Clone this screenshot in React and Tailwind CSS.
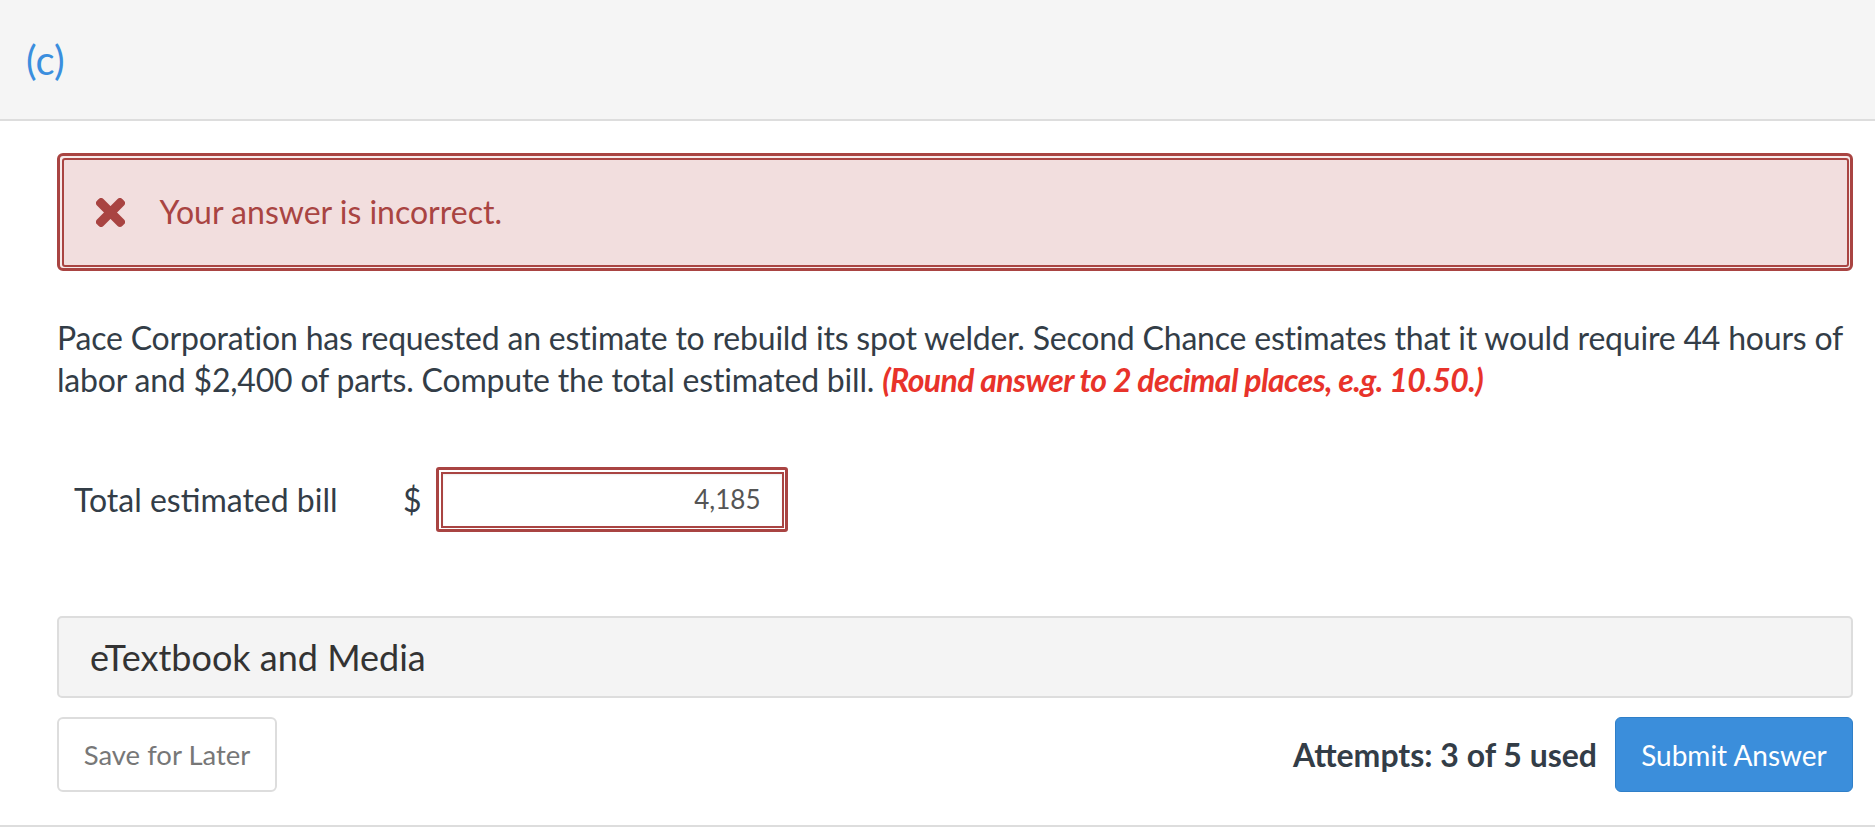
import React from "react";

function TimesIcon() {
  return (
    <svg width="29" height="29" viewBox="-12 68 376 376" className="shrink-0" fill="#a94442">
      <path
        stroke="#a94442"
        strokeWidth="24"
        strokeLinejoin="round"
        d="M242.72 256l100.07-100.07c12.28-12.28 12.28-32.19 0-44.48l-22.24-22.24c-12.28-12.28-32.19-12.28-44.48 0L176 189.28 75.93 89.21c-12.28-12.28-32.19-12.28-44.48 0L9.21 111.45c-12.28 12.28-12.28 32.19 0 44.48L109.28 256 9.21 356.07c-12.28 12.28-12.28 32.19 0 44.48l22.24 22.24c12.28 12.28 32.2 12.28 44.48 0L176 322.72l100.07 100.07c12.28 12.28 32.2 12.28 44.48 0l22.24-22.24c12.28-12.28 12.28-32.19 0-44.48L242.72 256z"
      />
    </svg>
  );
}

export default function App() {
  return (
    <div className="w-[1875px] h-[831px] bg-white overflow-hidden font-['Lato',sans-serif]">
      <header className="h-[121px] bg-[#f5f5f5] border-b-2 border-[#dddddd] flex items-center pl-[26px]">
        <span className="text-[40px] text-[#3b8ede]">(c)</span>
      </header>

      <div className="pl-[57px] pr-[22px] pt-[32px] pb-[33px] border-b-2 border-[#dddddd]">
        {/* error alert */}
        <div className="h-[118px] border-[3px] border-[#a94442] rounded-[6px] p-[1.5px] bg-[#f7ebeb]">
          <div className="h-full border-2 border-[#a94442] rounded-[3px] bg-[#f2dede] flex items-center pl-[32px]">
            <TimesIcon />
            <span className="ml-[35px] text-[32px] text-[#a94442]">Your answer is incorrect.</span>
          </div>
        </div>

        <p className="mt-[46px] text-[32px] leading-[42px] tracking-[-0.2px] text-[#333d47]">
          Pace Corporation has requested an estimate to rebuild its spot welder. Second Chance estimates that it would require 44 hours of labor and $2,400 of parts. Compute the total estimated bill.{" "}
          <span className="font-bold italic tracking-[-0.6px] text-[#e8332a]">(Round answer to 2 decimal places, e.g. 10.50.)</span>
        </p>

        <div className="mt-[66px] h-[65px] flex items-center">
          <span className="ml-[17px] w-[329px] text-[32px] text-[#333d47]">Total estimated bill</span>
          <span className="w-[33px] text-[32px] text-[#333d47]">$</span>
          <div className="w-[352px] h-[65px] border-[3px] border-[#a94442] rounded-[3px] p-[1.5px] bg-white">
            <div className="h-full border-2 border-[#a94442] flex items-center justify-end pr-[21px] text-[26px] text-[#555555] shadow-[inset_0_1px_2px_rgba(0,0,0,0.08)]">
              4,185
            </div>
          </div>
        </div>

        <div className="mt-[84px] h-[82px] border-2 border-[#dddddd] rounded-[5px] bg-[#f4f4f4] flex items-center pl-[31px]">
          <span className="text-[36px] text-[#333333]">eTextbook and Media</span>
        </div>

        <div className="mt-[19px] flex items-center justify-between">
          <button className="w-[220px] h-[75px] border-2 border-[#dddddd] rounded-[6px] bg-white text-[27.5px] text-[#777777]">
            Save for Later
          </button>
          <div className="flex items-center">
            <span className="text-[32px] font-bold text-[#333d47]">Attempts: 3 of 5 used</span>
            <button className="ml-[18px] w-[238px] h-[75px] border border-[#2f7fc8] rounded-[6px] bg-[#3b8edb] text-[28px] text-white">
              Submit Answer
            </button>
          </div>
        </div>
      </div>
    </div>
  );
}
